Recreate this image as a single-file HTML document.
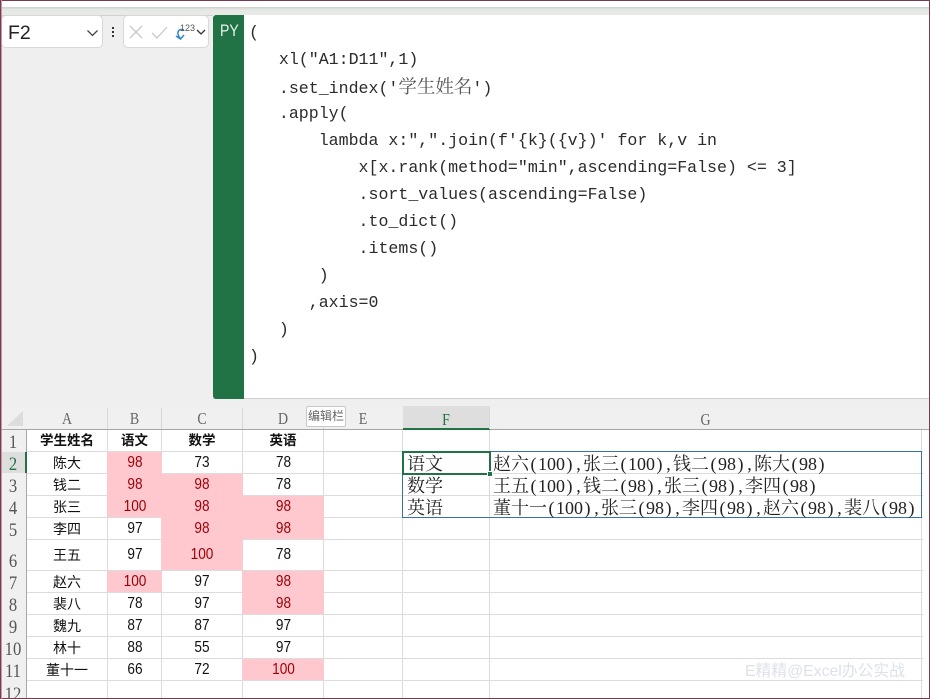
<!DOCTYPE html>
<html><head><meta charset="utf-8">
<style>
*{box-sizing:border-box}
html,body{margin:0;padding:0;background:#fff}
#p{position:relative;width:930px;height:699px;overflow:hidden;background:#fff;font-family:"Liberation Sans","Noto Sans CJK SC",sans-serif}
#p div{position:absolute}
.c{white-space:pre;font:16.6px/27px "Liberation Mono","Noto Sans CJK SC",monospace;color:#2b2b2b;left:249px}
.c span{font:18.5px/27px "Noto Serif CJK SC",serif;color:#555}
.h{height:22px;font:17px/22px "Liberation Serif","Noto Serif CJK SC",serif;color:#666;text-align:center;top:408px;transform:scaleX(.82)}
.r{left:0;width:26px;text-align:center;font:18.5px/20px "Liberation Serif",serif;color:#555;transform:scaleX(.9)}
.t{font:14px/22px "Liberation Sans","Noto Sans CJK SC",sans-serif;color:#111;text-align:center;white-space:pre;margin-top:1px}
.n{font-size:15.5px;transform:scaleX(.88)}
.b{font-weight:bold}
.p{background:#ffc7ce}
.red{color:#9c0006}
.vl{top:430px;width:1px;height:268px;background:#dcdcdc}
.hl{left:27px;width:896px;height:1px;background:#dcdcdc}
.hs{top:408px;width:1px;height:21px;background:#d8d8d8}
.s{font:18px/22px "Liberation Serif","Noto Serif CJK SC",serif;color:#222;white-space:pre}
.s i{font-style:normal;display:inline-block;width:.5em;text-align:center}
</style></head>
<body><div id="p">
<!-- ribbon background -->
<div style="left:0;top:0;width:930px;height:430px;background:#efefef"></div>
<div style="left:0;top:0;width:930px;height:7px;background:#fff"></div>
<div style="left:0;top:7px;width:930px;height:9px;background:linear-gradient(#cdcfcc,#e6e8e5 30%,#e9ebe8)"></div>
<div style="left:0;top:15px;width:930px;height:1px;background:#d0d2cf"></div>
<!-- name box -->
<div style="left:1px;top:15px;width:102px;height:33px;background:#fff;border:1px solid #d8d8d8;border-radius:5px"></div>
<div style="left:8px;top:21px;font:19.5px/24px 'Liberation Sans',sans-serif;color:#222">F2</div>
<svg style="position:absolute;left:86px;top:29px" width="14" height="9"><path d="M1.5 1.5L6.5 6.5L11.5 1.5" fill="none" stroke="#444" stroke-width="1.3"/></svg>
<div style="left:112px;top:27px;width:2px;height:2px;background:#333"></div>
<div style="left:112px;top:31px;width:2px;height:2px;background:#333"></div>
<div style="left:112px;top:35px;width:2px;height:2px;background:#333"></div>
<!-- buttons -->
<div style="left:123px;top:15px;width:86px;height:33px;background:#fff;border:1px solid #d8d8d8;border-radius:5px"></div>
<svg style="position:absolute;left:128px;top:24px" width="82" height="18">
<path d="M2 2L14 14M14 2L2 14" stroke="#c8c8c8" stroke-width="1.3" fill="none"/>
<path d="M24 9L29 14L39 3" stroke="#c8c8c8" stroke-width="1.3" fill="none"/>
<path d="M56 6C50 4 48 9 52 14M48 12L52.5 15L56 11" stroke="#2f86c4" stroke-width="1.5" fill="none"/>
<path d="M69 6L73 10L77 6" stroke="#333" stroke-width="1.3" fill="none"/>
</svg>
<div style="left:180px;top:23px;font:9px/10px 'Liberation Sans',sans-serif;color:#555">123</div>
<!-- formula bar -->
<div style="left:213px;top:15px;width:717px;height:384px;background:#fff;border-bottom:1px solid #cfcfcf"></div>
<div style="left:213px;top:15px;width:31px;height:384px;background:#217346;border-radius:3px 0 0 3px"></div>
<div style="left:220px;top:20px;font:16.5px/22px 'Liberation Sans',sans-serif;color:#e8f3ec;transform:scaleX(.85);transform-origin:0 0">PY</div>
<div class="c" style="top:19px">(</div>
<div class="c" style="top:46px">   xl("A1:D11",1)</div>
<div class="c" style="top:73px">   .set_index('<span>学生姓名</span>')</div>
<div class="c" style="top:100px">   .apply(</div>
<div class="c" style="top:127px">       lambda x:",".join(f'{k}({v})' for k,v in</div>
<div class="c" style="top:154px">           x[x.rank(method="min",ascending=False) &lt;= 3]</div>
<div class="c" style="top:181px">           .sort_values(ascending=False)</div>
<div class="c" style="top:208px">           .to_dict()</div>
<div class="c" style="top:235px">           .items()</div>
<div class="c" style="top:262px">       )</div>
<div class="c" style="top:289px">      ,axis=0</div>
<div class="c" style="top:316px">   )</div>
<div class="c" style="top:343px">)</div>
<!-- sheet -->
<div style="left:0;top:430px;width:930px;height:269px;background:#fff"></div>
<div style="left:0;top:407px;width:930px;height:23px;background:#f0f0f0"></div>
<div style="left:0;top:430px;width:27px;height:269px;background:#f0f0f0"></div>
<div style="left:0;top:429px;width:930px;height:1px;background:#a6a6a6"></div>
<div style="left:26px;top:430px;width:1px;height:269px;background:#a6a6a6"></div>
<svg style="position:absolute;left:7px;top:411px" width="17" height="16"><path d="M16 0V15H0Z" fill="#dcdcdc"/></svg>
<div style="left:403px;top:406px;width:87px;height:24px;background:#dedede"></div>
<div style="left:403px;top:428px;width:87px;height:2px;background:#217346"></div>
<div style="left:0;top:452px;width:26px;height:21px;background:#dedede"></div>
<div style="left:25px;top:452px;width:2px;height:21px;background:#217346"></div>
<!-- grid vertical -->
<div class="vl" style="left:107px"></div>
<div class="vl" style="left:161px"></div>
<div class="vl" style="left:242px"></div>
<div class="vl" style="left:323px"></div>
<div class="vl" style="left:402px"></div>
<div class="vl" style="left:489px"></div>
<div class="vl" style="left:921px"></div>
<div class="hs" style="left:107px"></div>
<div class="hs" style="left:161px"></div>
<div class="hs" style="left:242px"></div>
<div class="hs" style="left:323px"></div>
<div class="hs" style="left:489px"></div>
<!-- grid horizontal -->
<div class="hl" style="top:451px"></div>
<div class="hl" style="top:473px"></div>
<div class="hl" style="top:495px"></div>
<div class="hl" style="top:517px"></div>
<div class="hl" style="top:539px"></div>
<div class="hl" style="top:570px"></div>
<div class="hl" style="top:592px"></div>
<div class="hl" style="top:614px"></div>
<div class="hl" style="top:636px"></div>
<div class="hl" style="top:658px"></div>
<div class="hl" style="top:680px"></div>
<!-- pink fills -->
<div class="p" style="left:107px;top:452px;width:55px;height:65px"></div>
<div class="p" style="left:161px;top:474px;width:82px;height:96px"></div>
<div class="p" style="left:242px;top:496px;width:82px;height:43px"></div>
<div class="p" style="left:107px;top:571px;width:55px;height:21px"></div>
<div class="p" style="left:242px;top:571px;width:82px;height:43px"></div>
<div class="p" style="left:242px;top:659px;width:82px;height:21px"></div>
<!-- col headers -->
<div class="h" style="left:27px;width:80px">A</div>
<div class="h" style="left:108px;width:53px">B</div>
<div class="h" style="left:162px;width:80px">C</div>
<div class="h" style="left:243px;width:80px">D</div>
<div class="h" style="left:324px;width:78px">E</div>
<div class="h" style="left:403px;width:86px;color:#217346;top:409px">F</div>
<div class="h" style="left:490px;width:431px;top:409px">G</div>
<!-- row headers -->
<div class="r" style="top:433px">1</div>
<div class="r" style="top:455px;color:#217346">2</div>
<div class="r" style="top:477px">3</div>
<div class="r" style="top:499px">4</div>
<div class="r" style="top:521px">5</div>
<div class="r" style="top:552px">6</div>
<div class="r" style="top:574px">7</div>
<div class="r" style="top:596px">8</div>
<div class="r" style="top:618px">9</div>
<div class="r" style="top:640px">10</div>
<div class="r" style="top:662px">11</div>
<div class="r" style="top:685px">12</div>
<!-- row 1 -->
<div class="t b" style="left:27px;width:80px;top:429px;font-size:13.5px">学生姓名</div>
<div class="t b" style="left:108px;width:53px;top:429px;font-size:13.5px">语文</div>
<div class="t b" style="left:162px;width:80px;top:429px;font-size:13.5px">数学</div>
<div class="t b" style="left:243px;width:80px;top:429px;font-size:13.5px">英语</div>
<!-- row 2 -->
<div class="t" style="left:27px;width:80px;top:451px">陈大</div>
<div class="t n red" style="left:108px;width:54px;top:451px">98</div>
<div class="t n" style="left:162px;width:80px;top:451px">73</div>
<div class="t n" style="left:243px;width:81px;top:451px">78</div>
<!-- row 3 -->
<div class="t" style="left:27px;width:80px;top:473px">钱二</div>
<div class="t n red" style="left:108px;width:54px;top:473px">98</div>
<div class="t n red" style="left:162px;width:80px;top:473px">98</div>
<div class="t n" style="left:243px;width:81px;top:473px">78</div>
<!-- row 4 -->
<div class="t" style="left:27px;width:80px;top:495px">张三</div>
<div class="t n red" style="left:108px;width:54px;top:495px">100</div>
<div class="t n red" style="left:162px;width:80px;top:495px">98</div>
<div class="t n red" style="left:243px;width:81px;top:495px">98</div>
<!-- row 5 -->
<div class="t" style="left:27px;width:80px;top:517px">李四</div>
<div class="t n" style="left:108px;width:54px;top:517px">97</div>
<div class="t n red" style="left:162px;width:80px;top:517px">98</div>
<div class="t n red" style="left:243px;width:81px;top:517px">98</div>
<!-- row 6 -->
<div class="t" style="left:27px;width:80px;top:543px">王五</div>
<div class="t n" style="left:108px;width:54px;top:543px">97</div>
<div class="t n red" style="left:162px;width:80px;top:543px">100</div>
<div class="t n" style="left:243px;width:81px;top:543px">78</div>
<!-- row 7 -->
<div class="t" style="left:27px;width:80px;top:570px">赵六</div>
<div class="t n red" style="left:108px;width:54px;top:570px">100</div>
<div class="t n" style="left:162px;width:80px;top:570px">97</div>
<div class="t n red" style="left:243px;width:81px;top:570px">98</div>
<!-- row 8 -->
<div class="t" style="left:27px;width:80px;top:592px">裴八</div>
<div class="t n" style="left:108px;width:54px;top:592px">78</div>
<div class="t n" style="left:162px;width:80px;top:592px">97</div>
<div class="t n red" style="left:243px;width:81px;top:592px">98</div>
<!-- row 9 -->
<div class="t" style="left:27px;width:80px;top:614px">魏九</div>
<div class="t n" style="left:108px;width:54px;top:614px">87</div>
<div class="t n" style="left:162px;width:80px;top:614px">87</div>
<div class="t n" style="left:243px;width:81px;top:614px">97</div>
<!-- row 10 -->
<div class="t" style="left:27px;width:80px;top:636px">林十</div>
<div class="t n" style="left:108px;width:54px;top:636px">88</div>
<div class="t n" style="left:162px;width:80px;top:636px">55</div>
<div class="t n" style="left:243px;width:81px;top:636px">97</div>
<!-- row 11 -->
<div class="t" style="left:27px;width:80px;top:658px">董十一</div>
<div class="t n" style="left:108px;width:54px;top:658px">66</div>
<div class="t n" style="left:162px;width:80px;top:658px">72</div>
<div class="t n red" style="left:243px;width:81px;top:658px">100</div>
<!-- F/G block -->
<div style="left:402px;top:451px;width:520px;height:67px;border:1px solid #3b6fa8"></div>
<div style="left:402px;top:451px;width:89px;height:24px;border:2px solid #217346"></div>
<div style="left:487px;top:471px;width:6px;height:6px;background:#217346;border:1px solid #fff"></div>
<div class="s" style="left:407px;top:453px">语文</div>
<div class="s" style="left:407px;top:475px">数学</div>
<div class="s" style="left:407px;top:497px">英语</div>
<div class="s" style="left:493px;top:453px">赵六<i>(</i>100<i>)</i><i>,</i>张三<i>(</i>100<i>)</i><i>,</i>钱二<i>(</i>98<i>)</i><i>,</i>陈大<i>(</i>98<i>)</i></div>
<div class="s" style="left:493px;top:475px">王五<i>(</i>100<i>)</i><i>,</i>钱二<i>(</i>98<i>)</i><i>,</i>张三<i>(</i>98<i>)</i><i>,</i>李四<i>(</i>98<i>)</i></div>
<div class="s" style="left:493px;top:497px">董十一<i>(</i>100<i>)</i><i>,</i>张三<i>(</i>98<i>)</i><i>,</i>李四<i>(</i>98<i>)</i><i>,</i>赵六<i>(</i>98<i>)</i><i>,</i>裴八<i>(</i>98<i>)</i></div>
<!-- tooltip -->
<div style="left:306px;top:406px;width:40px;height:21px;background:#fff;border:1px solid #c8c8c8;border-radius:2px;font:12px/19px 'Liberation Sans','Noto Sans CJK SC',sans-serif;color:#666;text-align:center;white-space:nowrap">编辑栏</div>
<!-- watermark -->
<div style="left:745px;top:662px;font:15.8px/20px 'Liberation Sans','Noto Sans CJK SC',sans-serif;color:#dde1ea;white-space:nowrap">E精精@Excel办公实战</div>
<!-- window border -->
<div style="left:0;top:0;width:930px;height:1px;background:#7a3a50"></div>
<div style="left:0;top:698px;width:930px;height:1px;background:#7a3a50"></div>
<div style="left:0;top:0;width:1px;height:699px;background:#7a3a50"></div>
<div style="left:1px;top:0;width:1px;height:699px;background:#c49aa8"></div>
<div style="left:929px;top:0;width:1px;height:699px;background:#7a3a50"></div>
</div></body></html>
